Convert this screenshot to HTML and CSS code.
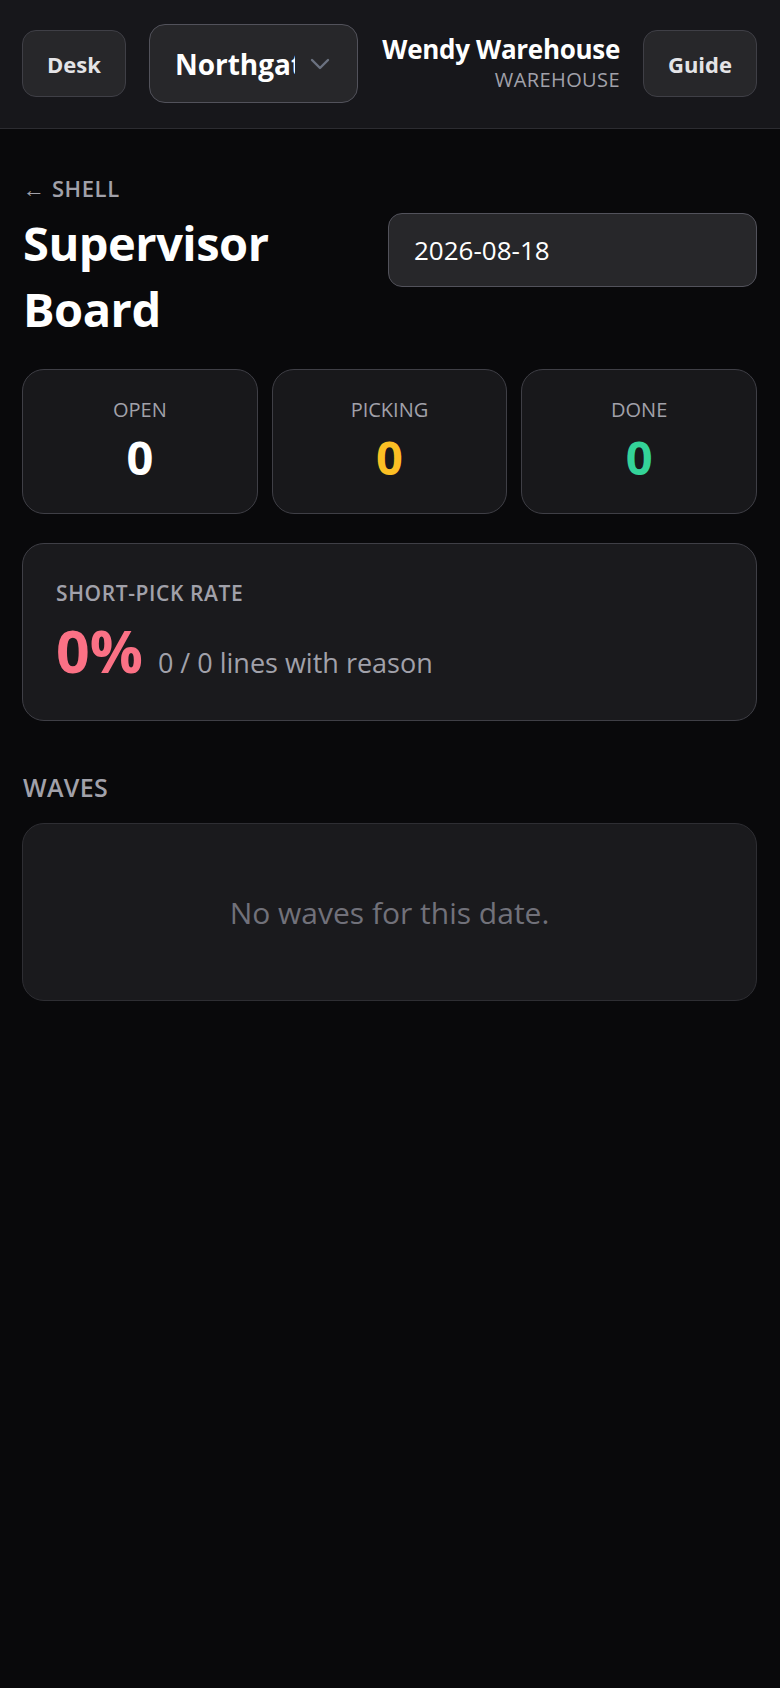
FILE: index.html
```html
<!DOCTYPE html>
<html lang="en">
<head>
<meta charset="utf-8">
<title>Supervisor Board</title>
<link rel="stylesheet" href="styles.css">
</head>
<body>
<header class="topbar">
  <button class="btn">Desk</button>
  <div class="select">
    <span class="select-text">Northgate</span>
    <svg class="chev" width="20" height="12" viewBox="0 0 20 12"><path d="M2 2 L10 10 L18 2" fill="none" stroke="#6b7280" stroke-width="2.4" stroke-linecap="round" stroke-linejoin="round"/></svg>
  </div>
  <div class="who">
    <div class="who-name">Wendy Warehouse</div>
    <div class="who-role">WAREHOUSE</div>
  </div>
  <button class="btn">Guide</button>
</header>
<main class="page">
  <div class="title-row">
    <div class="title-col">
      <a class="back">← SHELL</a>
      <h1 class="title">Supervisor Board</h1>
    </div>
    <div class="date-input">2026-08-18</div>
  </div>
  <section class="stats">
    <div class="stat"><div class="stat-label">OPEN</div><div class="stat-val white">0</div></div>
    <div class="stat"><div class="stat-label">PICKING</div><div class="stat-val amber">0</div></div>
    <div class="stat"><div class="stat-label">DONE</div><div class="stat-val green">0</div></div>
  </section>
  <section class="card rate">
    <div class="rate-label">SHORT-PICK RATE</div>
    <div class="rate-row"><span class="rate-val">0%</span><span class="rate-sub">0 / 0 lines with reason</span></div>
  </section>
  <h2 class="section-h">WAVES</h2>
  <section class="card empty">No waves for this date.</section>
</main>
</body>
</html>
```
FILE: styles.css
```css
* { box-sizing: border-box; }
html, body { margin: 0; padding: 0; }
body {
  background: #09090b;
  color: #fff;
  font-family: "Open Sans", "Noto Sans", sans-serif;
  min-height: 1688px;
}
.topbar {
  display: flex;
  align-items: center;
  gap: 23px;
  padding: 24px 23px 25px 22px;
  background: #17171b;
  border-bottom: 1px solid #2c2c31;
}
.btn {
  height: 67px;
  padding: 0 24px;
  background: #27272a;
  border: 1.5px solid #3f3f46;
  border-radius: 14px;
  color: #e4e4e7;
  font-family: inherit;
  font-weight: 700;
  font-size: 22px;
}
.select {
  width: 209px;
  height: 79px;
  flex: none;
  display: flex;
  align-items: center;
  padding: 0 27px 0 25px;
  background: #27272a;
  border: 1.5px solid #52525b;
  border-radius: 16px;
}
.select-text {
  width: 120px;
  overflow: hidden;
  white-space: nowrap;
  font-weight: 700;
  font-size: 28px;
  color: #fff;
}
.chev { margin-left: auto; }
.who { flex: 1; text-align: right; }
.who-name { font-weight: 700; font-size: 26px; line-height: 32px; color: #fff; letter-spacing: -0.3px; }
.who-role { font-size: 20px; line-height: 30px; color: #a1a1aa; letter-spacing: 0.4px; }

.page { padding: 44px 23px 40px 22px; }
.title-row { display: flex; justify-content: space-between; align-items: flex-start; }
.title-col { display: flex; flex-direction: column; }
.back {
  font-weight: 600;
  font-size: 22px;
  line-height: 30px;
  letter-spacing: 0.6px;
  color: #a1a1aa;
  padding-left: 1px;
}
.title {
  margin: 7px 0 0 1px;
  font-weight: 700;
  font-size: 47px;
  line-height: 66px;
  letter-spacing: -0.5px;
  width: 300px;
  color: #fff;
}
.date-input {
  width: 369px;
  height: 74px;
  margin-top: 40px;
  display: flex;
  align-items: center;
  padding-left: 25px;
  background: #27272a;
  border: 1.5px solid #52525b;
  border-radius: 14px;
  font-size: 26px;
  color: #fff;
}
.stats {
  display: grid;
  grid-template-columns: repeat(3, 1fr);
  gap: 14px;
  margin-top: 27px;
}
.stat {
  height: 145px;
  background: #18181b;
  border: 1.5px solid #3f3f46;
  border-radius: 22px;
  text-align: center;
  padding-top: 25px;
}
.stat-label { font-size: 20px; line-height: 30px; color: #a1a1aa; }
.stat-val { font-weight: 700; font-size: 47px; line-height: 56px; margin-top: 4px; }
.white { color: #fff; }
.amber { color: #fbbf24; }
.green { color: #34d399; }
.card {
  background: #1a1a1d;
  border: 1.5px solid #3f3f46;
  border-radius: 22px;
}
.rate {
  margin-top: 29px;
  height: 178px;
  padding: 34px 33px 0 33px;
}
.rate-label {
  font-weight: 600;
  font-size: 21px;
  line-height: 30px;
  letter-spacing: 0.6px;
  color: #a1a1aa;
}
.rate-row { display: flex; align-items: baseline; gap: 15px; margin-top: 6px; }
.rate-val { font-weight: 700; font-size: 59px; line-height: 72px; color: #fb7185; }
.rate-sub { font-size: 27px; color: #a1a1aa; }
.section-h {
  margin: 49px 0 0 1px;
  font-weight: 600;
  font-size: 25px;
  line-height: 34px;
  letter-spacing: 0.3px;
  color: #a1a1aa;
}
.empty {
  margin-top: 19px;
  height: 178px;
  display: flex;
  align-items: center;
  justify-content: center;
  font-size: 30px;
  color: #71717a;
  border-color: #2e2e33;
}
```
